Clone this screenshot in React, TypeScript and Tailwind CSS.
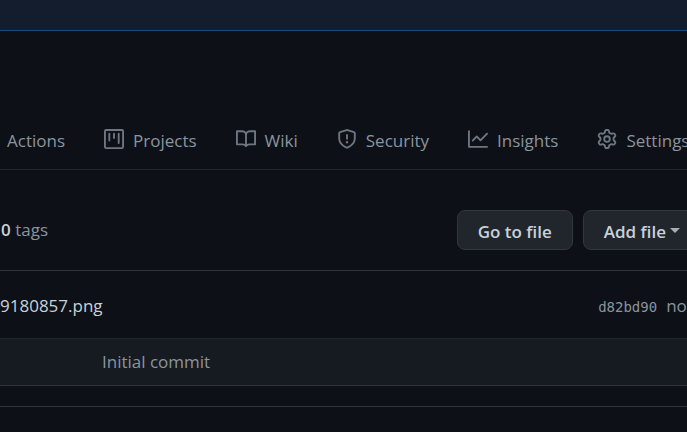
import type { ReactNode } from 'react';

function Octicon({ d }: { d: string }) {
  return (
    <svg viewBox="0 0 16 16" className="size-5 shrink-0 fill-[#6e7681]" aria-hidden="true">
      <path fillRule="evenodd" d={d} />
    </svg>
  );
}

const projectPath =
  'M1.75 0A1.75 1.75 0 000 1.75v12.5C0 15.216.784 16 1.75 16h12.5A1.75 1.75 0 0016 14.25V1.75A1.75 1.75 0 0014.25 0H1.75zM1.5 1.75a.25.25 0 01.25-.25h12.5a.25.25 0 01.25.25v12.5a.25.25 0 01-.25.25H1.75a.25.25 0 01-.25-.25V1.75zM11.75 3a.75.75 0 00-.75.75v7.5a.75.75 0 001.5 0v-7.5a.75.75 0 00-.75-.75zm-8.25.75a.75.75 0 011.5 0v5.5a.75.75 0 01-1.5 0v-5.5zM8 3a.75.75 0 00-.75.75v3.5a.75.75 0 001.5 0v-3.5A.75.75 0 008 3z';
const bookPath =
  'M0 1.75A.75.75 0 01.75 1h4.253c1.227 0 2.317.59 3 1.501A3.744 3.744 0 0111.006 1h4.245a.75.75 0 01.75.75v10.5a.75.75 0 01-.75.75h-4.507a2.25 2.25 0 00-1.591.659l-.622.621a.75.75 0 01-1.06 0l-.622-.621A2.25 2.25 0 005.258 13H.75a.75.75 0 01-.75-.75V1.75zm8.755 3a2.25 2.25 0 012.25-2.25H14.5v9h-3.757c-.71 0-1.4.201-1.992.572l.004-7.322zm-1.504 7.324l.004-5.073-.002-2.253A2.25 2.25 0 005.003 2.5H1.5v9h3.757a3.75 3.75 0 011.994.574z';
const shieldPath =
  'M7.467.133a1.75 1.75 0 011.066 0l5.25 1.68A1.75 1.75 0 0115 3.48V7c0 1.566-.32 3.182-1.303 4.682-.983 1.498-2.585 2.813-5.032 3.855a1.7 1.7 0 01-1.33 0c-2.447-1.042-4.049-2.357-5.032-3.855C1.32 10.182 1 8.566 1 7V3.48a1.75 1.75 0 011.217-1.667l5.25-1.68zm.61 1.429a.25.25 0 00-.153 0l-5.25 1.68a.25.25 0 00-.174.238V7c0 1.358.275 2.666 1.057 3.86.784 1.194 2.121 2.34 4.366 3.297a.2.2 0 00.154 0c2.245-.956 3.582-2.104 4.366-3.298C13.225 9.666 13.5 8.36 13.5 7V3.48a.25.25 0 00-.174-.237l-5.25-1.68zM9 10.5a1 1 0 11-2 0 1 1 0 012 0zm-.25-5.75a.75.75 0 10-1.5 0v3a.75.75 0 001.5 0v-3z';
const graphPath =
  'M1.5 1.75a.75.75 0 00-1.5 0v12.5c0 .414.336.75.75.75h14.5a.75.75 0 000-1.5H1.5V1.75zm14.28 2.53a.75.75 0 00-1.06-1.06L10 7.94 7.53 5.47a.75.75 0 00-1.06 0L3.22 8.72a.75.75 0 001.06 1.06L7 7.06l2.47 2.47a.75.75 0 001.06 0l5.25-5.25z';
const gearPath =
  'M7.429 1.525a6.593 6.593 0 011.142 0c.036.003.108.036.137.146l.289 1.105c.147.56.55.967.997 1.189.174.086.341.183.501.29.417.278.97.423 1.53.27l1.102-.303c.11-.03.175.016.195.046.219.31.41.641.573.989.014.031.022.11-.059.19l-.815.806c-.411.406-.562.957-.53 1.456a4.588 4.588 0 010 .582c-.032.499.119 1.05.53 1.456l.815.806c.08.08.073.159.059.19a6.494 6.494 0 01-.573.99c-.02.029-.086.074-.195.045l-1.103-.303c-.559-.153-1.112-.008-1.529.27-.16.107-.327.204-.5.29-.449.222-.851.628-.998 1.189l-.289 1.105c-.029.11-.101.143-.137.146a6.613 6.613 0 01-1.142 0c-.036-.003-.108-.037-.137-.146l-.289-1.105c-.147-.56-.55-.967-.997-1.189a4.502 4.502 0 01-.501-.29c-.417-.278-.97-.423-1.53-.27l-1.102.303c-.11.03-.175-.016-.195-.046a6.492 6.492 0 01-.573-.989c-.014-.031-.022-.11.059-.19l.815-.806c.411-.406.562-.957.53-1.456a4.587 4.587 0 010-.582c.032-.499-.119-1.05-.53-1.456l-.815-.806c-.08-.08-.073-.159-.059-.19a6.44 6.44 0 01.573-.99c.02-.029.086-.075.195-.045l1.103.303c.559.153 1.112.008 1.529-.27.16-.107.327-.204.5-.29.449-.222.851-.628.998-1.189l.289-1.105c.029-.11.101-.143.137-.146zM8 0c-.236 0-.47.01-.701.03-.743.065-1.29.615-1.458 1.261l-.29 1.106c-.017.066-.078.158-.211.224a5.994 5.994 0 00-.668.386c-.123.082-.233.09-.3.071L3.27 2.776c-.644-.177-1.392.02-1.82.63a7.977 7.977 0 00-.704 1.217c-.315.675-.111 1.422.363 1.891l.815.806c.05.048.098.147.088.294a6.084 6.084 0 000 .772c.01.147-.038.246-.088.294l-.815.806c-.474.469-.678 1.216-.363 1.891.2.428.436.835.704 1.218.428.609 1.176.806 1.82.63l1.103-.303c.066-.019.176-.011.299.071.213.143.436.272.668.386.133.066.194.158.212.224l.289 1.106c.169.646.715 1.196 1.458 1.26a8.094 8.094 0 001.402 0c.743-.064 1.29-.614 1.458-1.26l.29-1.106c.017-.066.078-.158.211-.224a5.98 5.98 0 00.668-.386c.123-.082.233-.09.3-.071l1.102.302c.644.177 1.392-.02 1.82-.63.268-.382.505-.789.704-1.217.315-.675.111-1.422-.364-1.891l-.814-.806c-.05-.048-.098-.147-.088-.294a6.1 6.1 0 000-.772c-.01-.147.039-.246.088-.294l.814-.806c.475-.469.679-1.216.364-1.891a7.992 7.992 0 00-.704-1.218c-.428-.609-1.176-.806-1.82-.63l-1.103.303c-.066.019-.176.011-.299-.071a5.991 5.991 0 00-.668-.386c-.133-.066-.194-.158-.212-.224L10.16 1.29C9.99.645 9.444.095 8.701.031A8.094 8.094 0 008 0zm1.5 8a1.5 1.5 0 11-3 0 1.5 1.5 0 013 0zM11 8a3 3 0 11-6 0 3 3 0 016 0z';

function Tab({ icon, children }: { icon?: ReactNode; children: ReactNode }) {
  return (
    <li>
      <a href="#" className="flex items-center gap-[9px]">
        {icon}
        <span className="pt-1">{children}</span>
      </a>
    </li>
  );
}

const buttonClass =
  'flex h-10 shrink-0 items-center rounded-lg border border-[#32373e] bg-[#21262d] px-5 font-semibold text-[#c9d1d9]';

export default function App() {
  return (
    <div className="min-h-screen overflow-hidden bg-[#0d1117] font-['Open_Sans','Noto_Sans',sans-serif] text-[17px] leading-6 whitespace-nowrap text-[#8b949e]">
      <header className="h-[31px] border-b border-[#1c4780] bg-[#131d2e]" />

      <nav aria-label="Repository" className="mt-20 border-b border-[#21262d] pt-[14px] pb-4">
        <ul className="flex gap-[39px] pl-[7px]">
          <Tab>Actions</Tab>
          <Tab icon={<Octicon d={projectPath} />}>Projects</Tab>
          <Tab icon={<Octicon d={bookPath} />}>Wiki</Tab>
          <Tab icon={<Octicon d={shieldPath} />}>Security</Tab>
          <Tab icon={<Octicon d={graphPath} />}>Insights</Tab>
          <Tab icon={<Octicon d={gearPath} />}>Settings</Tab>
        </ul>
      </nav>

      <main>
        <div className="-mr-[18px] flex items-center justify-between pt-10 pb-5 pl-px">
          <a href="#">
            <strong className="font-semibold text-[#c9d1d9]">0</strong> tags
          </a>
          <div className="flex gap-[10px]">
            <button type="button" className={buttonClass}>
              <span className="pt-1">Go to file</span>
            </button>
            <button type="button" className={buttonClass}>
              <span className="pt-1">Add file</span>
              <span className="ml-1 border-x-5 border-t-5 border-x-transparent border-t-[#a8aeb5]" />
              <span className="w-1" />
            </button>
          </div>
        </div>

        <section className="border-y border-[#30363d]">
          <div className="-mr-[13px] flex h-[67px] items-center justify-between pt-0.5">
            <a href="#" className="text-[#c9d1d9]">
              9180857.png
            </a>
            <div className="flex items-center gap-[9px]">
              <a href="#" className="pt-0.5 font-['DejaVu_Sans_Mono',monospace] text-sm">
                d82bd90
              </a>
              <span>now</span>
            </div>
          </div>
          <div className="flex h-[47px] items-center border-t border-[#21262d] bg-[#161b22] pl-[102px]">
            <a href="#">Initial commit</a>
          </div>
        </section>

        <section className="mt-5 border-t border-[#30363d]" />
      </main>
    </div>
  );
}
